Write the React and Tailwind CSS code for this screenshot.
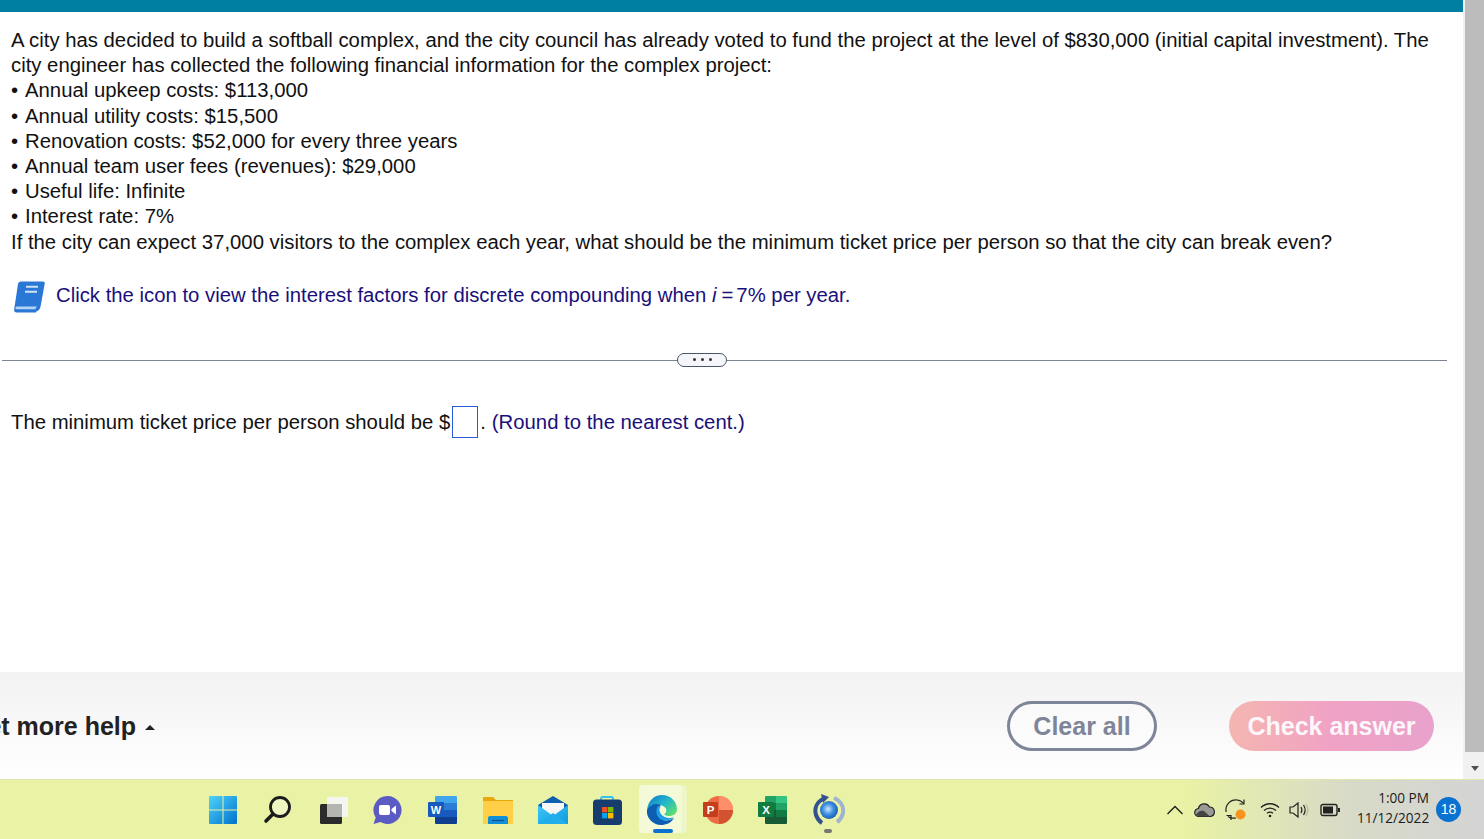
const lines = [
  "Annual upkeep costs: $113,000",
  "Annual utility costs: $15,500",
  "Renovation costs: $52,000 for every three years",
  "Annual team user fees (revenues): $29,000",
  "Useful life: Infinite",
  "Interest rate: 7%",
];

function BookIcon() {
  return (
    <svg width="34" height="34" viewBox="0 0 34 34" className="shrink-0">
      <path d="M10 2.500h22c1.300 0 2 .8 1.700 2.200l-4.200 23c-.6 2.500-2 4-4 4.500l-.5 1.300H6c-2.200 0-3.200-1.300-2.800-3.300L7 5c.3-1.600 1.400-2.500 3-2.500z" fill="#2a78d6" />
      <path d="M6.300 27.500h19.900c-.9.400-1.500 1.300-1.700 2.700H5.500c-.8 0-1.300-.5-1-1.300.2-.8.800-1.400 1.800-1.400z" fill="#b4d4f5" />
      <path d="M15 7.700h12M14 12.700h12" stroke="#cfe3f8" strokeWidth="2" />
    </svg>
  );
}

function WindowsIcon() {
  return (
    <svg width="30" height="30" viewBox="0 0 30 30">
      <defs>
        <linearGradient id="win" x1="0" y1="0" x2="1" y2="1">
          <stop offset="0" stopColor="#4fd4fa" />
          <stop offset="1" stopColor="#0071cc" />
        </linearGradient>
      </defs>
      <path d="M1 2q0-1 1-1h12.500v13.500H1zM15.500 1H28q1 0 1 1v12.500H15.500zM1 15.500h13.500V29H2q-1 0-1-1zM15.500 15.500H29V28q0 1-1 1H15.500z" fill="url(#win)" />
    </svg>
  );
}

function SearchIcon() {
  return (
    <svg width="30" height="30" viewBox="0 0 30 30" fill="none" stroke="#1c1c1c">
      <circle cx="17" cy="12" r="9.500" strokeWidth="2.800" fill="#ffffff" fillOpacity="0.3" />
      <path d="M10 19l-7 7" strokeWidth="3.600" strokeLinecap="round" />
    </svg>
  );
}

function TaskViewIcon() {
  return (
    <svg width="30" height="30" viewBox="0 0 30 30">
      <rect x="2" y="9" width="22" height="20" rx="1.500" fill="#2b2b2b" />
      <rect x="9" y="2" width="21" height="20" rx="1.500" fill="#f6f6f0" />
      <rect x="9" y="9" width="15" height="13" fill="#b5b5b0" />
    </svg>
  );
}

function ChatIcon() {
  return (
    <svg width="30" height="30" viewBox="0 0 30 30">
      <path d="M15.500 1a14 14 0 1 1-7 26.100L1.500 29l2.200-6.500A14 14 0 0 1 15.500 1z" fill="#5b5bc4" />
      <rect x="7" y="10" width="11" height="10" rx="2" fill="#fff" />
      <path d="M19.500 14l4.500-3.500v9L19.500 16z" fill="#fff" />
    </svg>
  );
}

function WordIcon() {
  return (
    <svg width="30" height="30" viewBox="0 0 30 30">
      <path d="M8 1h20q1 0 1 1v6H7V2q0-1 1-1z" fill="#41a5ee" />
      <path d="M7 8h22v7H7z" fill="#2b7cd3" />
      <path d="M7 15h22v7H7z" fill="#185abd" />
      <path d="M7 22h22v6q0 1-1 1H8q-1 0-1-1z" fill="#103f91" />
      <rect x="0" y="7" width="16" height="15" rx="1" fill="#185abd" />
      <text x="8" y="18.500" textAnchor="middle" fontSize="11" fontWeight="700" fill="#fff" fontFamily="Liberation Sans, sans-serif">W</text>
    </svg>
  );
}

function FolderIcon() {
  return (
    <svg width="30" height="30" viewBox="0 0 30 30">
      <path d="M0 3q0-1 1-1h9l3 3h17v5H0z" fill="#e8a70f" />
      <path d="M0 6h30v23H0z" fill="#ffcf48" />
      <path d="M5 29v-6c0-1 .8-2 2-2h16c1.200 0 2 1 2 2v6z" fill="#0f8fd8" />
      <path d="M9 25.500h12" stroke="#0a4f8f" strokeWidth="1.200" />
    </svg>
  );
}

function MailIcon() {
  return (
    <svg width="30" height="30" viewBox="0 0 30 30">
      <defs>
        <linearGradient id="mailBody" x1="0" y1="0" x2="1" y2="1">
          <stop offset="0" stopColor="#3cc6f5" />
          <stop offset="1" stopColor="#0f9be0" />
        </linearGradient>
      </defs>
      <path d="M0 10L15 1l15 9v6H0z" fill="#0f5fb0" />
      <path d="M4 8h22v7l-11 7-11-7z" fill="#f6f6f6" />
      <path d="M0 10l15 11 15-11v19H0z" fill="url(#mailBody)" />
      <path d="M0 29l15-11 15 11z" fill="#22aeea" />
    </svg>
  );
}

function StoreIcon() {
  return (
    <svg width="30" height="30" viewBox="0 0 30 30">
      <path d="M9 7V3.500c0-1 .6-1.500 1.500-1.500h9c.9 0 1.500.5 1.500 1.500V7" fill="none" stroke="#35c1f1" strokeWidth="1.800" />
      <rect x="1" y="4.500" width="29" height="25.500" rx="3.500" fill="#173d6e" />
      <rect x="10" y="12" width="5.400" height="5.400" fill="#f25022" />
      <rect x="16" y="12" width="5.400" height="5.400" fill="#7fba00" />
      <rect x="10" y="18" width="5.400" height="5.400" fill="#00a4ef" />
      <rect x="16" y="18" width="5.400" height="5.400" fill="#ffb900" />
    </svg>
  );
}

function EdgeIcon() {
  return (
    <svg width="32" height="32" viewBox="0 0 32 32">
      <defs>
        <linearGradient id="edgeTop" x1="0" y1="0" x2="1" y2="0.800">
          <stop offset="0" stopColor="#0f78d0" />
          <stop offset="0.550" stopColor="#23b8c8" />
          <stop offset="1" stopColor="#5fe06a" />
        </linearGradient>
      </defs>
      <path d="M1 16C2 7 8 1 16 1c9 0 15 7 15 14 0 5-4 7-8 7-3 0-5-1-5-2 3-1 3-5 0-7-5-4-13-3-17 3z" fill="url(#edgeTop)" />
      <path d="M1 16c3-6 10-7 14-5-4 2-5 7-3 11 3 5 10 6 16 2-3 5-8 7-13 7C7 31 0 24 1 16z" fill="#0c5fb0" />
      <path d="M12 12c-3 4-2 11 4 14 4 1 9 0 12-3-4 2-10 1-13-3-2-3-2-6 0-8z" fill="#1a9fe8" />
      <path d="M15 12c3 0 6 2 5 6l-2 2c1 2 3 3 6 3-4 1-8-1-10-5-.5-3 0-5 1-6z" fill="#f2f8d0" />
    </svg>
  );
}

function PowerPointIcon() {
  return (
    <svg width="30" height="30" viewBox="0 0 30 30">
      <circle cx="16" cy="15" r="14" fill="#ed6c47" />
      <path d="M16 1a14 14 0 0 1 14 14H16z" fill="#ff8f6b" />
      <path d="M16 15h14a14 14 0 0 1-14 14z" fill="#d35230" />
      <rect x="0" y="7" width="15" height="15" rx="1" fill="#c43e1c" />
      <text x="7.500" y="18.500" textAnchor="middle" fontSize="11.500" fontWeight="700" fill="#fff" fontFamily="Liberation Sans, sans-serif">P</text>
    </svg>
  );
}

function ExcelIcon() {
  return (
    <svg width="30" height="30" viewBox="0 0 30 30">
      <path d="M8 1h10v7H7V2q0-1 1-1z" fill="#21a366" />
      <path d="M18 1h10q1 0 1 1v6H18z" fill="#33c481" />
      <path d="M7 8h11v7H7z" fill="#107c41" />
      <path d="M18 8h11v7H18z" fill="#21a366" />
      <path d="M7 15h11v7H7z" fill="#185c37" />
      <path d="M18 15h11v7H18z" fill="#107c41" />
      <path d="M7 22h22v6q0 1-1 1H8q-1 0-1-1z" fill="#185c37" />
      <rect x="0" y="7" width="16" height="15" rx="1" fill="#107c41" />
      <text x="8" y="18.500" textAnchor="middle" fontSize="11.500" fontWeight="700" fill="#fff" fontFamily="Liberation Sans, sans-serif">X</text>
    </svg>
  );
}

function SyncGlobeIcon() {
  return (
    <svg width="32" height="32" viewBox="0 0 32 32" fill="none">
      <defs>
        <radialGradient id="globe" cx="0.450" cy="0.450" r="0.600">
          <stop offset="0" stopColor="#cfeafb" />
          <stop offset="0.500" stopColor="#3f8fe0" />
          <stop offset="1" stopColor="#1255b0" />
        </radialGradient>
      </defs>
      <path d="M10 5C4 8 1 14 3 21c1 3 3 6 6 8" stroke="#31518f" strokeWidth="4" />
      <path d="M21 4c7 3 10 9 9 15-1 4-3 7-6 9" stroke="#9fb2cf" strokeWidth="4" />
      <path d="M8 0l8 3-6 6z" fill="#31518f" />
      <circle cx="16" cy="16" r="9" fill="url(#globe)" />
    </svg>
  );
}

function TrayIcons() {
  return (
    <div className="flex items-center">
      <svg width="18" height="12" viewBox="0 0 18 12" fill="none" stroke="#1c1c1c" strokeWidth="1.300" className="ml-[1166px]">
        <path d="M1.500 10L9 2.500l7.500 7.500" />
      </svg>
      <svg width="22" height="16" viewBox="0 0 22 16" className="ml-[10px]">
        <path d="M5 14.500a4 4 0 0 1-.6-8A6 6 0 0 1 15.500 5a4.800 4.800 0 0 1 1 9.500z" fill="#9a9a96" stroke="#222" strokeWidth="1.200" />
        <path d="M2 13c2-4 5-5 8-4l6 5.500H5z" fill="#444" />
      </svg>
      <svg width="24" height="24" viewBox="0 0 24 24" fill="none" stroke="#222" strokeWidth="1.200" className="ml-[8px]">
        <path d="M2 14C1 7 6 1.500 13 2c3 .2 5 1.500 6.500 3.500" />
        <path d="M20 1.500v4.500h-4.500" />
        <path d="M12 20c-3 .5-6 0-8-1.500" />
        <path d="M2.500 17.500h4.500v4.500" />
        <circle cx="16.500" cy="16.500" r="5" fill="#f7931e" stroke="none" />
      </svg>
      <svg width="20" height="16" viewBox="0 0 20 16" fill="none" stroke="#222" strokeWidth="1.300" className="ml-[12px]">
        <path d="M1 5.500c5-5 13-5 18 0M4 8.500c3.500-3.300 8.500-3.300 12 0M7 11.300c2-1.500 4-1.500 6 0" />
        <circle cx="10" cy="14" r="1.300" fill="#222" stroke="none" />
      </svg>
      <svg width="20" height="18" viewBox="0 0 20 18" fill="none" stroke="#222" strokeWidth="1.200" className="ml-[9px]">
        <path d="M1 6v6h3l5 4V2L4 6z" />
        <path d="M12 6c1.200 2 1.200 4 0 6M14.500 4c2 3 2 7 0 10" />
        <path d="M17 3c2.500 4 2.500 8 0 12" stroke="#b9b9a8" />
      </svg>
      <svg width="20" height="14" viewBox="0 0 20 14" className="ml-[11px]">
        <rect x="1" y="1.500" width="16" height="11" rx="2" fill="none" stroke="#222" strokeWidth="1.400" />
        <rect x="3" y="3.500" width="10" height="7" fill="#222" />
        <rect x="18" y="5" width="2" height="4" fill="#222" />
      </svg>
    </div>
  );
}

export default function App() {
  return (
    <div className="h-[839px] w-[1484px] overflow-hidden flex flex-col bg-white font-['Liberation_Sans',Arial,sans-serif]">
      <div className="flex h-[779px]">
        <div className="w-[1463px] flex flex-col">
          <div className="h-3 bg-[#007fa3]" />
          <div className="flex-1 pt-[16px] pl-[11px] pr-[15px] text-[20.320px] leading-[25.200px] text-[#111]">
            <p>A city has decided to build a softball complex, and the city council has already voted to fund the project at the level of $830,000 (initial capital investment). The city engineer has collected the following financial information for the complex project:</p>
            {lines.map((line) => (
              <p key={line}>
                <span className="inline-block w-[14px]">•</span>
                {line}
              </p>
            ))}
            <p>If the city can expect 37,000 visitors to the complex each year, what should be the minimum ticket price per person so that the city can break even?</p>
            <div className="mt-[24px] flex items-center gap-[11px] text-[#1a0f7a]">
              <BookIcon />
              <span>
                Click the icon to view the interest factors for discrete compounding when <i>i</i>
                <span className="ml-[5px]">=</span>
                <span className="ml-[3px]">7%</span> per year.
              </span>
            </div>
            <div className="relative -ml-[9px] mt-[47px] w-[1445px] border-t border-[#7d8595]">
              <div className="absolute left-[675px] -top-[8px] flex h-[14px] w-[50px] items-center justify-center gap-[5px] rounded-full border border-[#4a5568] bg-[#f4f6f9]">
                <span className="h-[3px] w-[3px] rounded-full bg-[#333]" />
                <span className="h-[3px] w-[3px] rounded-full bg-[#333]" />
                <span className="h-[3px] w-[3px] rounded-full bg-[#333]" />
              </div>
            </div>
            <div className="mt-[45px] flex items-center">
              <span className="pt-[2px]">The minimum ticket price per person should be $</span>
              <span className="ml-[2px] mr-[2px] inline-block h-[32px] w-[26px] border border-[#2a5bd7]" />
              <span className="pt-[2px]">.</span>
              <span className="ml-[6px] pt-[2px] text-[#1a0f7a]">(Round to the nearest cent.)</span>
            </div>
          </div>
          <div className="flex h-[107px] items-center bg-gradient-to-b from-[#f2f2f2] to-white pt-[1px] pr-[29px]">
            <span className="-ml-[32px] pt-[2px] text-[25px] font-bold text-[#222]">Get more help</span>
            <span className="ml-[9px] mt-[3px] h-0 w-0 border-x-[5px] border-b-[5px] border-x-transparent border-b-[#222]" />
            <button className="ml-auto h-[50px] w-[150px] rounded-full border-[3px] border-[#7f8598] bg-white/40 pt-[2px] text-[25px] font-bold text-[#7f8598]">
              Clear all
            </button>
            <button className="ml-[72px] h-[50px] w-[205px] rounded-full bg-gradient-to-r from-[#f4b6b0] via-[#f0a2c4] to-[#e8a2cc] pt-[2px] text-[25px] font-bold text-[#fdf6fa]">
              Check answer
            </button>
          </div>
        </div>
        <div className="flex w-[21px] flex-col bg-[#f1f1f1]">
          <div className="ml-[2px] h-[752px] bg-[#bcbcbc]" />
          <div className="flex flex-1 items-center justify-center pl-[2px] pt-[6px]">
            <span className="h-0 w-0 border-x-[4px] border-t-[5px] border-x-transparent border-t-[#505050]" />
          </div>
        </div>
      </div>
      <div className="relative flex h-[60px] items-center border-t border-[#e0e4ae] bg-[linear-gradient(90deg,#e9f2a5_0%,#e9f2a5_80%,#d8dac8_91%,#d4d4d4_100%)]">
        <TrayIcons />
        <div className="ml-[17px] w-[72px] pb-[3px] text-right font-['Open_Sans',sans-serif] text-[13.600px] leading-[20px] text-[#1c1c1c]">
          <div>1:00 PM</div>
          <div>11/12/2022</div>
        </div>
        <span className="ml-[7px] flex h-[25px] w-[25px] items-center justify-center rounded-full bg-[#0a72d1] text-[14px] text-white">18</span>
        <div className="absolute left-[648px] top-[5px] h-[48px] w-[39px] rounded-[4px] bg-[#eff6c6]" />
        <div className="absolute left-[639px] top-[5px] h-[48px] w-[43px] rounded-[4px] bg-[#f4f9d8]" />
        <span className="absolute left-[653px] top-[49px] h-[4px] w-[20px] rounded-full bg-[#0a72d1]" />
        <span className="absolute left-[824px] top-[49px] h-[4px] w-[8px] rounded-full bg-[#777]" />
        <div className="absolute left-[208px] top-[14px] flex items-center">
          <WindowsIcon />
          <div className="ml-[25px]"><SearchIcon /></div>
          <div className="ml-[25px]"><TaskViewIcon /></div>
          <div className="ml-[24px]"><ChatIcon /></div>
          <div className="ml-[26px]"><WordIcon /></div>
          <div className="ml-[25px]"><FolderIcon /></div>
          <div className="ml-[25px]"><MailIcon /></div>
          <div className="ml-[24px]"><StoreIcon /></div>
          <div className="ml-[24px]"><EdgeIcon /></div>
          <div className="ml-[25px]"><PowerPointIcon /></div>
          <div className="ml-[25px]"><ExcelIcon /></div>
          <div className="ml-[25px]"><SyncGlobeIcon /></div>
        </div>
      </div>
    </div>
  );
}
